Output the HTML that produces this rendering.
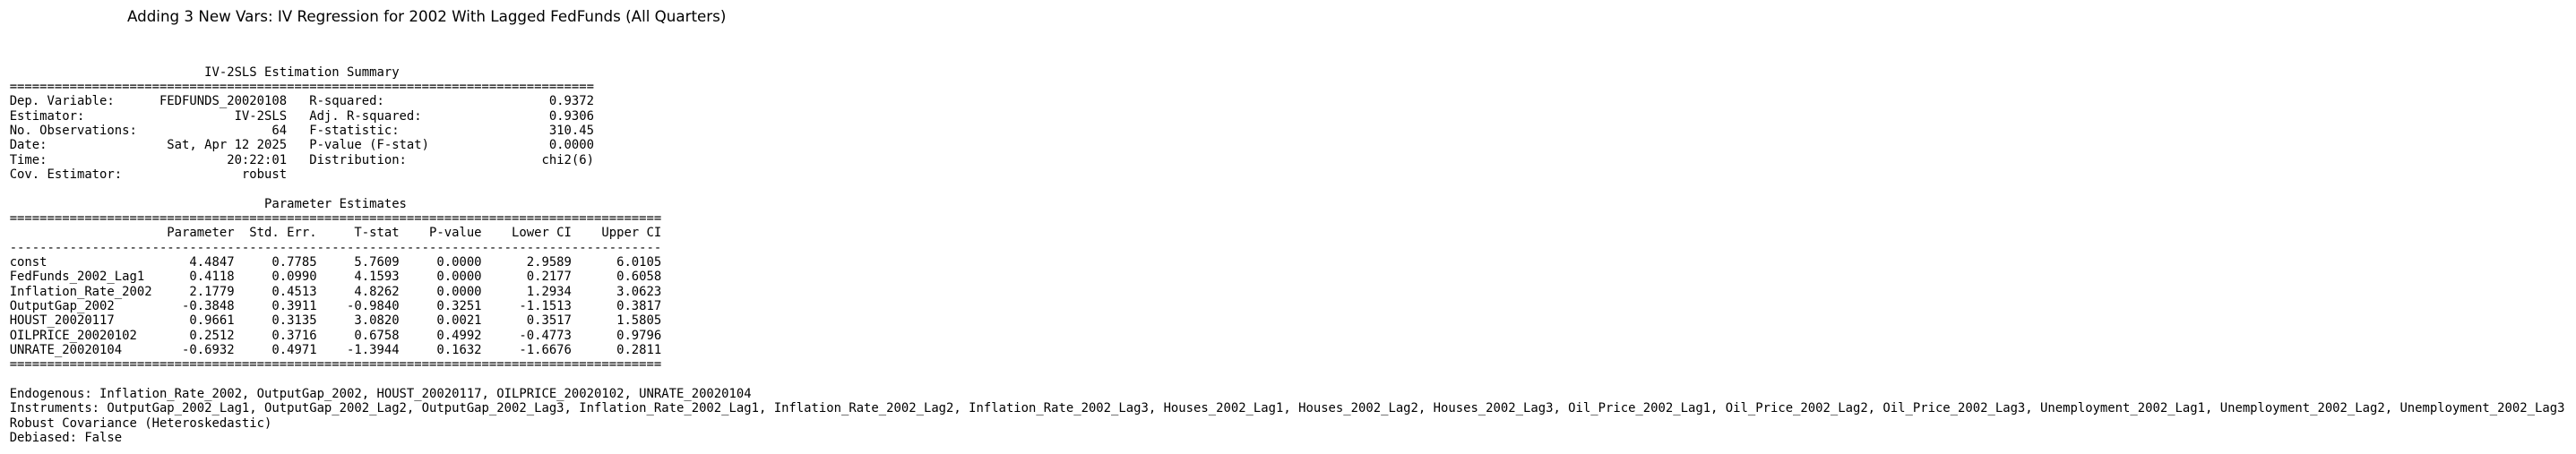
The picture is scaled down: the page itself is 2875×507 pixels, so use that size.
<!DOCTYPE html>
<html><head><meta charset="utf-8"><style>
html,body{margin:0;padding:0;background:#fff;}
body{width:2875px;height:507px;position:relative;overflow:hidden;}
#t{position:absolute;left:142px;top:7px;font-family:"DejaVu Sans","Liberation Sans",sans-serif;font-size:16.7px;line-height:22px;color:#000;white-space:pre;}
pre{position:absolute;left:10.7px;top:72.5px;margin:0;font-family:"DejaVu Sans Mono","Liberation Mono",monospace;font-size:13.9px;line-height:16.35px;color:#000;}
</style></head><body>
<div id="t">Adding 3 New Vars: IV Regression for 2002 With Lagged FedFunds (All Quarters)</div>
<pre>                          IV-2SLS Estimation Summary
==============================================================================
Dep. Variable:      FEDFUNDS_20020108   R-squared:                      0.9372
Estimator:                    IV-2SLS   Adj. R-squared:                 0.9306
No. Observations:                  64   F-statistic:                    310.45
Date:                Sat, Apr 12 2025   P-value (F-stat)                0.0000
Time:                        20:22:01   Distribution:                  chi2(6)
Cov. Estimator:                robust

                                  Parameter Estimates
=======================================================================================
                     Parameter  Std. Err.     T-stat    P-value    Lower CI    Upper CI
---------------------------------------------------------------------------------------
const                   4.4847     0.7785     5.7609     0.0000      2.9589      6.0105
FedFunds_2002_Lag1      0.4118     0.0990     4.1593     0.0000      0.2177      0.6058
Inflation_Rate_2002     2.1779     0.4513     4.8262     0.0000      1.2934      3.0623
OutputGap_2002         -0.3848     0.3911    -0.9840     0.3251     -1.1513      0.3817
HOUST_20020117          0.9661     0.3135     3.0820     0.0021      0.3517      1.5805
OILPRICE_20020102       0.2512     0.3716     0.6758     0.4992     -0.4773      0.9796
UNRATE_20020104        -0.6932     0.4971    -1.3944     0.1632     -1.6676      0.2811
=======================================================================================

Endogenous: Inflation_Rate_2002, OutputGap_2002, HOUST_20020117, OILPRICE_20020102, UNRATE_20020104
Instruments: OutputGap_2002_Lag1, OutputGap_2002_Lag2, OutputGap_2002_Lag3, Inflation_Rate_2002_Lag1, Inflation_Rate_2002_Lag2, Inflation_Rate_2002_Lag3, Houses_2002_Lag1, Houses_2002_Lag2, Houses_2002_Lag3, Oil_Price_2002_Lag1, Oil_Price_2002_Lag2, Oil_Price_2002_Lag3, Unemployment_2002_Lag1, Unemployment_2002_Lag2, Unemployment_2002_Lag3
Robust Covariance (Heteroskedastic)
Debiased: False</pre>
</body></html>
